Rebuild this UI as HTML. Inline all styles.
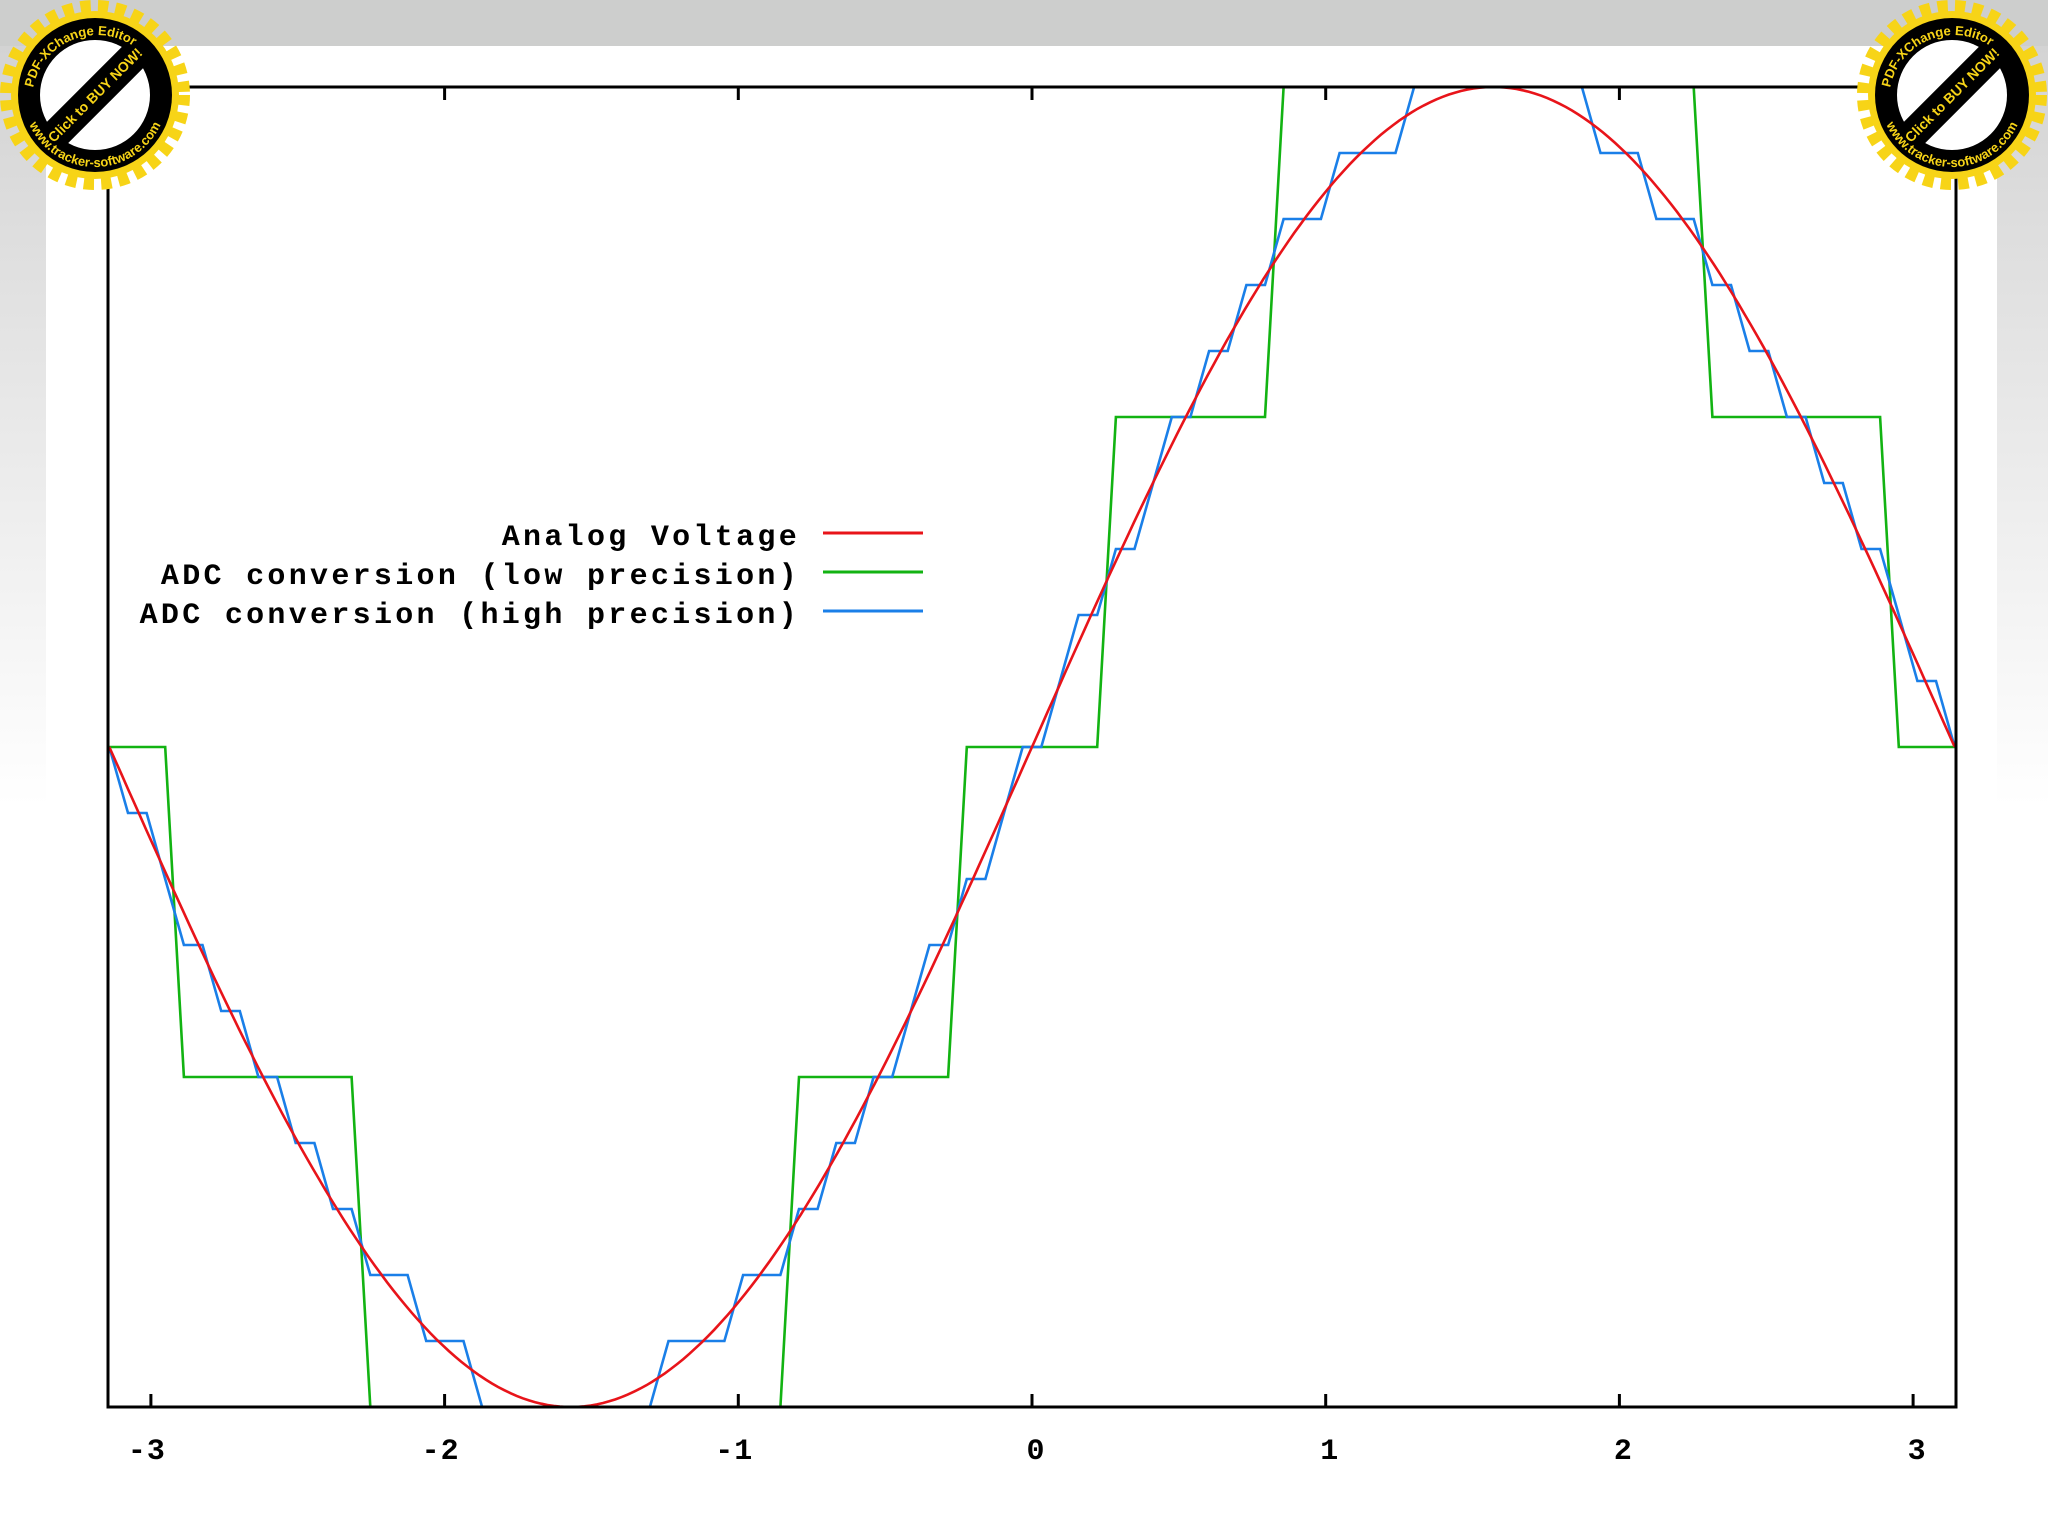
<!DOCTYPE html>
<html><head><meta charset="utf-8"><style>
html,body{margin:0;padding:0;width:2048px;height:1535px;overflow:hidden;background:#fff}
.top{position:absolute;left:0;top:0;width:2048px;height:46px;background:#cdcecd}
.sl{position:absolute;left:0;top:46px;width:46px;height:760px;background:linear-gradient(#d3d3d3,#fff)}
.sr{position:absolute;left:1997px;top:46px;width:51px;height:760px;background:linear-gradient(#d3d3d3,#fff)}
svg{position:absolute;left:0;top:0}
.t{font-family:"Liberation Mono",monospace;font-weight:bold;font-size:30px;letter-spacing:3.3px;fill:#000}
.xl{font-family:"Liberation Mono",monospace;font-weight:bold;font-size:30px;letter-spacing:1px;fill:#000}
</style></head><body>
<div class="top"></div><div class="sl"></div><div class="sr"></div>
<svg width="2048" height="1535" viewBox="0 0 2048 1535">
<rect x="46" y="46" width="1951" height="1489" fill="#fff"/>
<g id="curves" fill="none" stroke-width="2.6" stroke-linejoin="miter"></g>
<g stroke="#000" stroke-width="3" fill="none">
<rect x="108" y="87" width="1848" height="1320"/>
<g id="ticks"></g>
</g>
<g class="t" text-anchor="end">
<text x="800" y="545">Analog Voltage</text>
<text x="800" y="584">ADC conversion (low precision)</text>
<text x="800" y="623">ADC conversion (high precision)</text>
</g>
<line x1="823" y1="533" x2="923" y2="533" stroke="#e8141a" stroke-width="3"/>
<line x1="823" y1="572" x2="923" y2="572" stroke="#12b312" stroke-width="3"/>
<line x1="823" y1="611" x2="923" y2="611" stroke="#1a7fe8" stroke-width="3"/>
<g class="xl" text-anchor="middle" id="xl"></g>
<g id="b1" transform="translate(95,95)"></g>
<g id="b2" transform="translate(1952,95)"></g>
</svg>
<script>
var cx=1032,sc=293.7,cy=747,amp=660;
function X(x){return cx+x*sc}function Y(v){return cy-v*amp}
var g=document.getElementById('curves');
function path(f,col,n){var d='';for(var i=0;i<n;i++){var x=-Math.PI+i*2*Math.PI/(n-1);var v=f(Math.sin(x));d+=(i?'L':'M')+X(x).toFixed(1)+' '+Y(v).toFixed(1)}
var p=document.createElementNS('http://www.w3.org/2000/svg','path');p.setAttribute('d',d);p.setAttribute('stroke',col);g.appendChild(p)}
path(function(s){return Math.round(s*2)/2},'#12b312',100);
path(function(s){return Math.round(s*10)/10},'#1a7fe8',100);
path(function(s){return s},'#e8141a',300);
var t='',l='';for(var k=-3;k<=3;k++){var x=X(k);t+='<line x1="'+x+'" y1="87" x2="'+x+'" y2="100"/><line x1="'+x+'" y1="1407" x2="'+x+'" y2="1394"/>';l+='<text x="'+(x+(k<0?-4:4))+'" y="1459">'+(k<0?'-'+(-k):k)+'</text>'}
document.getElementById('ticks').innerHTML=t;document.getElementById('xl').innerHTML=l;
function badge(id){var s='<circle r="86" fill="none" stroke="#f7d417" stroke-width="18" stroke-dasharray="10 7"/><circle r="84" fill="#f7d417"/><circle r="77" fill="#000"/><circle r="55" fill="#fff"/>'+
'<rect x="-62" y="-15" width="124" height="30" fill="#000" transform="rotate(-45)"/>'+
'<text x="0" y="5" transform="rotate(-45)" text-anchor="middle" font-family="Liberation Sans" font-weight="bold" font-size="14" fill="#f7d417">Click to BUY NOW!</text>'+
'<path id="'+id+'p" d="M-58 30A65 65 0 0 1 62 -20" fill="none"/><path id="'+id+'q" d="M-72 0A72 72 0 0 0 72 0" fill="none"/>'+
'<text font-family="Liberation Sans" font-weight="bold" font-size="13" fill="#f7d417"><textPath href="#'+id+'p" startOffset="50%" text-anchor="middle">PDF-XChange Editor</textPath></text>'+
'<text font-family="Liberation Sans" font-weight="bold" font-size="13" fill="#f7d417"><textPath href="#'+id+'q" startOffset="50%" text-anchor="middle">www.tracker-software.com</textPath></text>';
document.getElementById(id).innerHTML=s}
badge('b1');badge('b2');
</script>
</body></html>
